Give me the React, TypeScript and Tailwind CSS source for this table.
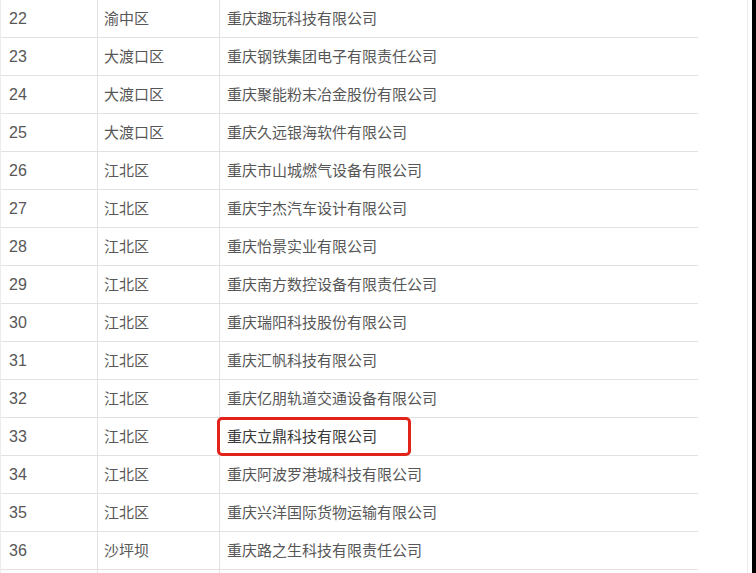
const rows: [string, string, string][] = [
  ["22", "渝中区", "重庆趣玩科技有限公司"],
  ["23", "大渡口区", "重庆钢铁集团电子有限责任公司"],
  ["24", "大渡口区", "重庆聚能粉末冶金股份有限公司"],
  ["25", "大渡口区", "重庆久远银海软件有限公司"],
  ["26", "江北区", "重庆市山城燃气设备有限公司"],
  ["27", "江北区", "重庆宇杰汽车设计有限公司"],
  ["28", "江北区", "重庆怡景实业有限公司"],
  ["29", "江北区", "重庆南方数控设备有限责任公司"],
  ["30", "江北区", "重庆瑞阳科技股份有限公司"],
  ["31", "江北区", "重庆汇帆科技有限公司"],
  ["32", "江北区", "重庆亿朋轨道交通设备有限公司"],
  ["33", "江北区", "重庆立鼎科技有限公司"],
  ["34", "江北区", "重庆阿波罗港城科技有限公司"],
  ["35", "江北区", "重庆兴洋国际货物运输有限公司"],
  ["36", "沙坪坝", "重庆路之生科技有限责任公司"],
  ["", "", ""],
];

export default function App() {
  return (
    <div
      className="w-[756px] h-[573px] overflow-hidden bg-white flex text-[15px] text-[#575757]"
      style={{ fontFamily: '"Noto Sans CJK SC", "Liberation Sans", sans-serif' }}
    >
      <div className="w-[698px] flex flex-col border-l border-[#ececec]">
        {rows.map(([num, district, company], i) => (
          <div key={i} className="flex h-[38px] shrink-0 border-b border-[#e2e2e2]">
            <div
              className="w-[97px] border-r border-[#e2e2e2] flex items-center pl-[8px] text-[16px]"
              style={{ fontFamily: '"Liberation Sans", sans-serif' }}
            >
              {num}
            </div>
            <div className="w-[122px] border-r border-[#e2e2e2] flex items-center pl-[6px]">
              {district}
            </div>
            <div className="relative flex-1 flex items-center pl-[7px]">
              <span className={num === "33" ? "text-[#3a3a3a]" : undefined}>{company}</span>
              {num === "33" && (
                <div className="absolute left-[-3px] top-[-1px] w-[194px] h-[39px] border-[3px] border-[#e2231a] rounded-[5px]" />
              )}
            </div>
          </div>
        ))}
      </div>
      <div className="w-[50px] border-r border-[#ebebeb]" />
      <div className="w-[4px]" />
      <div className="flex-1 bg-black" />
    </div>
  );
}
